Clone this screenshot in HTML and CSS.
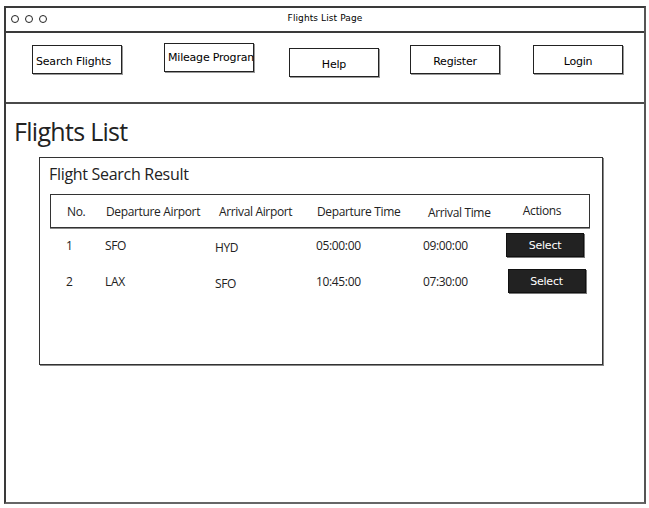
FILE: index.html
```html
<!DOCTYPE html>
<html>
<head>
<meta charset="utf-8">
<title>Flights List Page</title>
<link rel="stylesheet" href="styles.css">
</head>
<body>
<div class="window">
  <div class="titlebar">
    <div class="dots"><span class="dot"></span><span class="dot"></span><span class="dot"></span></div>
    <div class="title">Flights List Page</div>
  </div>
  <div class="nav">
    <div class="navbtn left b1">Search Flights</div>
    <div class="navbtn left b2">Mileage Program</div>
    <div class="navbtn b3">Help</div>
    <div class="navbtn b4">Register</div>
    <div class="navbtn b5">Login</div>
  </div>
  <div class="content">
    <h1 class="heading">Flights List</h1>
    <div class="card">
      <div class="card-title">Flight Search Result</div>
      <div class="thead row">
        <div>No.</div>
        <div>Departure Airport</div>
        <div>Arrival Airport</div>
        <div>Departure Time</div>
        <div class="down">Arrival Time</div>
        <div class="center up">Actions</div>
      </div>
      <div class="row body-row">
        <div class="num">1</div>
        <div>SFO</div>
        <div class="shift">HYD</div>
        <div>05:00:00</div>
        <div class="shift2">09:00:00</div>
        <div class="center"><span class="select">Select</span></div>
      </div>
      <div class="row body-row">
        <div class="num">2</div>
        <div>LAX</div>
        <div class="shift">SFO</div>
        <div>10:45:00</div>
        <div class="shift2">07:30:00</div>
        <div class="center"><span class="select sel2">Select</span></div>
      </div>
    </div>
  </div>
</div>
</body>
</html>
```
FILE: styles.css
```css
html, body {
  margin: 0;
  padding: 0;
  background: #fff;
}
.window {
  margin: 6px 0 0 4px;
  width: 642px;
  height: 498px;
  box-sizing: border-box;
  border: 2px solid #3a3a3a;
  border-right-color: #555;
  border-bottom-color: #666;
  display: flex;
  flex-direction: column;
  font-family: "DejaVu Sans", sans-serif;
  color: #000;
}
.titlebar {
  height: 23px;
  border-bottom: 2px solid #3a3a3a;
  display: flex;
  align-items: center;
  position: relative;
}
.dots {
  display: flex;
  gap: 6px;
  padding-left: 5px;
  margin-top: -2px;
}
.dot {
  width: 6px;
  height: 6px;
  border: 1.5px solid #222;
  border-radius: 50%;
}
.title {
  position: absolute;
  left: 0;
  right: 0;
  top: 5px;
  text-align: center;
  font-size: 9px;
  letter-spacing: 0.1px;
}
.nav {
  height: 57px;
  padding: 12px 0 0 26px;
  border-bottom: 2px solid #4a4a4a;
  display: flex;
  gap: 35px;
  align-items: flex-start;
}
.navbtn {
  width: 90px;
  height: 29px;
  box-sizing: border-box;
  border: 1.5px solid #222;
  box-shadow: 1px 1px 0 #999;
  display: flex;
  align-items: center;
  justify-content: center;
  padding-top: 4px;
  white-space: nowrap;
  overflow: hidden;
  font-size: 11px;
  letter-spacing: -0.2px;
}
.navbtn.left {
  justify-content: flex-start;
  padding-left: 3px;
}
.b2 { margin-top: -2px; margin-left: 7px; padding-top: 0; }
.b3 { margin-top: 3px; }
.b4 { margin-left: -4px; }
.b5 { margin-left: -2px; }
.content {
  flex: 1;
  padding: 0 0 0 8px;
}
.heading {
  margin: 12px 0 0 0;
  font-family: "Open Sans", sans-serif;
  font-weight: 400;
  font-size: 25px;
  line-height: 30px;
  color: #222;
  letter-spacing: -0.7px;
}
.card {
  margin: 11px 0 0 25px;
  width: 564px;
  height: 208px;
  box-sizing: border-box;
  border: 1.5px solid #333;
  box-shadow: 1px 1px 0 #888;
  padding: 5px 12px 0 9px;
  font-family: "Open Sans", sans-serif;
}
.card-title {
  font-size: 16px;
  line-height: 22px;
  color: #222;
  letter-spacing: -0.3px;
}
.row {
  display: grid;
  grid-template-columns: 39px 113px 98px 109px 79px 82px;
  padding-left: 16px;
  align-items: center;
  font-size: 12px;
  color: #222;
  letter-spacing: -0.35px;
}
.thead {
  margin: 9px 0 -1px 1px;
  height: 34px;
  box-sizing: border-box;
  border: 1.5px solid #333;
  box-shadow: 0 1px 0 #888;
}
.body-row {
  height: 36px;
  margin-left: 1px;
}
.num { padding-left: 0; }
.shift { margin-left: -3px; padding-top: 4px; }
.shift2 { margin-left: -2px; }
.down { padding-top: 2px; margin-left: 2px; }
.up { margin-top: -2px; margin-left: -8px; }
.center {
  display: flex;
  justify-content: center;
}
.select {
  width: 76px;
  height: 22px;
  background: #222;
  color: #fff;
  border: 1px solid #111;
  box-shadow: 1px 1px 0 #777;
  display: flex;
  align-items: center;
  justify-content: center;
  font-family: "DejaVu Sans", sans-serif;
  font-size: 11px;
  letter-spacing: -0.2px;
}
.sel2 {
  margin-left: 3px;
}
```
